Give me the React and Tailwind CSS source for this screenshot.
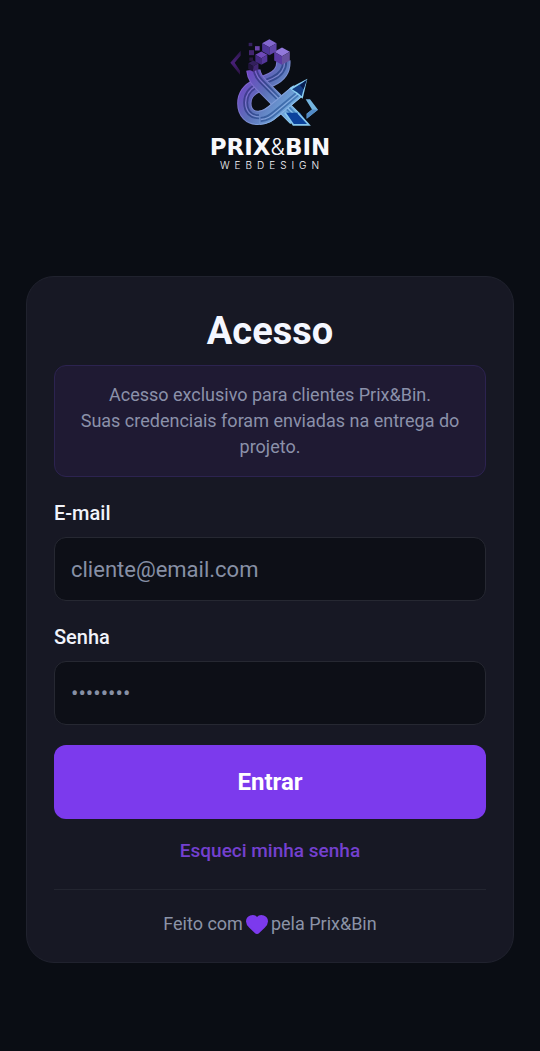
import { useState } from "react";
import { Heart } from "lucide-react";

const Cube = ({ x, y, s, top, left, right }) => (
  <g transform={`translate(${x} ${y}) scale(${s})`}>
    <path d="M0 -10 L9 -5 L0 0 L-9 -5 Z" fill={top} />
    <path d="M-9 -5 L0 0 L0 10 L-9 5 Z" fill={left} />
    <path d="M9 -5 L0 0 L0 10 L9 5 Z" fill={right} />
  </g>
);

const bowl =
  "M250 92 C252 122 236 138 214 148 L172 166 C142 180 133 198 133 220 C133 248 150 263 174 263 C196 263 208 254 222 242 L294 182";
const diagonal = "M160 120 C162 142 174 154 186 166 L286 266";
const pencil = "M178 263 C198 262 209 253 222 242 L291 184";

const Band = ({ d, dx = 0, dy = 0 }) => (
  <g fill="none" strokeLinejoin="round">
    <path d={d} stroke="url(#edge)" strokeWidth="43" />
    <path d={d} stroke="url(#body)" strokeWidth="37" />
    <path d={d} stroke="url(#shade)" strokeWidth="15" transform={`translate(${dx} ${dy})`} />
    <path d={d} stroke="url(#edge)" strokeWidth="4" transform={`translate(${dx} ${dy})`} />
  </g>
);

const LogoMark = () => (
  <svg
    viewBox="60 24 300 266"
    className="h-[89px] w-[100px]"
    role="img"
    aria-label="Prix&Bin"
  >
    <defs>
      <linearGradient id="edge" gradientUnits="userSpaceOnUse" x1="125" y1="120" x2="300" y2="250">
        <stop offset="0" stopColor="#8450d2" />
        <stop offset="0.45" stopColor="#7886cc" />
        <stop offset="1" stopColor="#8fd0f5" />
      </linearGradient>
      <linearGradient id="body" gradientUnits="userSpaceOnUse" x1="125" y1="130" x2="290" y2="240">
        <stop offset="0" stopColor="#7040c4" />
        <stop offset="0.45" stopColor="#5c70b8" />
        <stop offset="1" stopColor="#76b6e4" />
      </linearGradient>
      <linearGradient id="shade" gradientUnits="userSpaceOnUse" x1="125" y1="130" x2="290" y2="240">
        <stop offset="0" stopColor="#4c2f90" />
        <stop offset="0.45" stopColor="#344a90" />
        <stop offset="1" stopColor="#4a8cc6" />
      </linearGradient>
      <linearGradient id="chevron" x1="0" y1="0" x2="0" y2="1">
        <stop offset="0" stopColor="#2b164b" />
        <stop offset="0.5" stopColor="#482078" />
        <stop offset="1" stopColor="#28123f" />
      </linearGradient>
    </defs>

    <path d="M122 62 L122 76 L104 98 L120 122 L120 134 L91 98 Z" fill="url(#chevron)" />

    <Band d={bowl} dx={4} dy={-3} />
    <Band d={diagonal} dx={5} dy={-5} />
    <path d="M257 248 L300 248 L327 284 L280 284 Z" fill="#0b429c" />
    <path d="M255 248 L280 284 L327 284 L294 248" fill="none" stroke="#86c6ed" strokeWidth="5" />
    <Band d={pencil} dx={4} dy={5} />
    <path d="M268 174 L322 146 L308 206 Z" fill="#8bd0f3" />
    <path d="M276 177 L318 151 L305 198 L292 187 Z" fill="#123d83" />
    <path d="M300 165 L321 148 L311 177 Z" fill="#071d50" />

    <path d="M317 207 L330 207 L354 239 L320 266 L320 251 L336 238 Z" fill="#74b5df" />
    <path d="M336 238 L354 239 L320 266 L320 251 Z" fill="#528ac7" />

    <Cube x={160} y={108} s={1.7} top="#33205c" left="#21143f" right="#412773" />
    <Cube x={184} y={84} s={2} top="#6f49b9" left="#42287f" right="#54379a" />
    <Cube x={246} y={78} s={2.6} top="#9278db" left="#5a3aa4" right="#67519f" />
    <Cube x={208} y={51} s={2.4} top="#8368cf" left="#4e3598" right="#5f45a9" />
    <rect x="146" y="38" width="11" height="10" fill="#35205f" />
    <rect x="165" y="48" width="14" height="13" fill="#6b45ac" />
    <rect x="147" y="60" width="15" height="15" fill="#432570" />
    <rect x="148" y="82" width="11" height="10" fill="#291642" />
  </svg>
);

const Field = ({ id, label, ...props }) => (
  <div className="flex flex-col gap-3">
    <label htmlFor={id} className="text-xl leading-6 font-medium text-[#f1f3fa]">
      {label}
    </label>
    <input
      id={id}
      className="h-16 w-full rounded-xl border border-[#262832] bg-[#0d0f17] px-4 text-[22px] text-[#f1f3fa] outline-none placeholder:text-[#8790a5] focus:border-[#7c3aed]"
      {...props}
    />
  </div>
);

const App = () => {
  const [email, setEmail] = useState("");
  const [password, setPassword] = useState("");

  return (
    <main className="flex min-h-screen flex-col items-center bg-[#0a0d14] px-[26px] pt-[38px] pb-[88px] font-[Roboto,sans-serif]">
      <header className="flex flex-col items-center pb-[105px] text-[#f8f8fc]">
        <LogoMark />
        <p className="mt-2 font-['DejaVu_Sans',sans-serif] text-[23px] leading-6 font-bold">
          PRIX
          <span className="font-[Inter,sans-serif] font-light">&amp;</span>
          BIN
        </p>
        <p className="pl-1 font-[Inter,sans-serif] text-[10px] leading-3 font-light tracking-[5px]">
          WEBDESIGN
        </p>
      </header>

      <section className="w-full max-w-xl rounded-[28px] border border-[#20222e] bg-[#171824] px-[27px] pt-7 pb-6">
        <h1 className="text-center text-[38px] leading-[52px] font-bold text-[#f5f7ff]">
          Acesso
        </h1>
        <p className="mt-2 rounded-xl border border-[#2c2350] bg-[#1f1a33] p-4 text-center text-lg leading-[26px] text-[#8b91aa]">
          Acesso exclusivo para clientes Prix&amp;Bin.
          <br />
          Suas credenciais foram enviadas na entrega do projeto.
        </p>

        <form
          className="mt-6 flex flex-col"
          onSubmit={(e) => e.preventDefault()}
        >
          <div className="flex flex-col gap-6">
            <Field
              id="email"
              label="E-mail"
              type="email"
              placeholder="cliente@email.com"
              value={email}
              onChange={(e) => setEmail(e.target.value)}
            />
            <Field
              id="password"
              label="Senha"
              type="password"
              placeholder="••••••••"
              value={password}
              onChange={(e) => setPassword(e.target.value)}
            />
          </div>
          <button
            type="submit"
            className="mt-5 h-[74px] rounded-xl bg-[#7c3aed] text-2xl font-bold text-white"
          >
            Entrar
          </button>
        </form>

        <div className="mt-5 text-center text-[19px] leading-6 font-medium">
          <a href="#recuperar" className="text-[#7440cf]">
            Esqueci minha senha
          </a>
        </div>

        <footer className="mt-[26px] flex items-center justify-center gap-0.5 border-t border-[#232530] pt-5 text-lg leading-7 text-[#8b93a7]">
          <span>Feito com</span>
          <Heart size={24} className="fill-[#7c3aed] text-[#7c3aed]" />
          <span>pela Prix&amp;Bin</span>
        </footer>
      </section>
    </main>
  );
};

export default App;
